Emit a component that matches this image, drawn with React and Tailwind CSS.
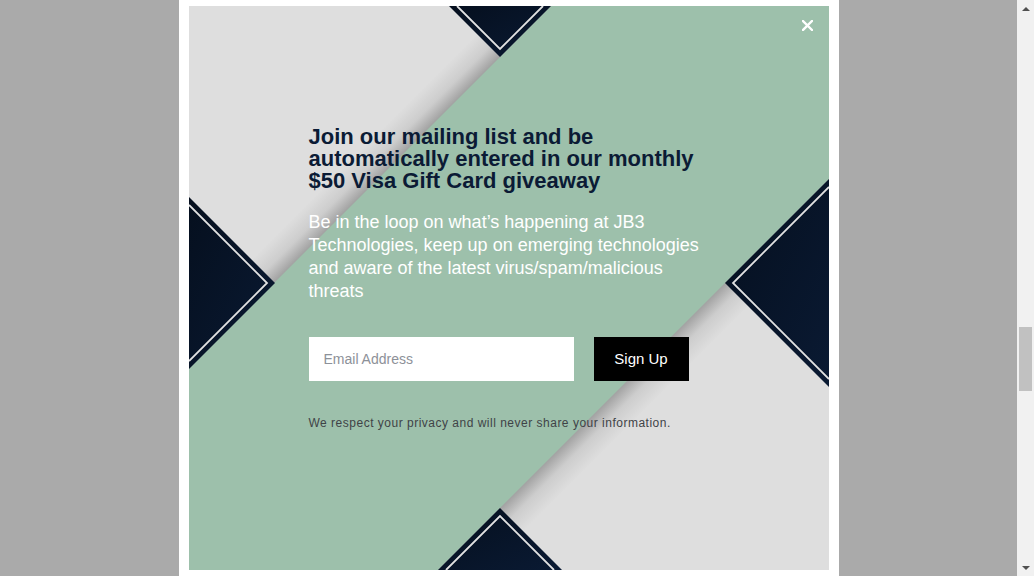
import React from 'react';

const Backdrop = () => (
    <svg className="absolute inset-0" width="640" height="564" viewBox="0 0 640 564">
        <defs>
            <linearGradient id="shadeTop" gradientUnits="userSpaceOnUse" x1="158" y1="158" x2="181" y2="181">
                <stop offset="0" stopColor="#dedede" />
                <stop offset="0.55" stopColor="#cdcdcd" />
                <stop offset="1" stopColor="#a2a2a2" />
            </linearGradient>
            <linearGradient id="shadeBottom" gradientUnits="userSpaceOnUse" x1="406.5" y1="406.5" x2="430" y2="430">
                <stop offset="0" stopColor="#a2a2a2" />
                <stop offset="0.45" stopColor="#cdcdcd" />
                <stop offset="1" stopColor="#dedede" />
            </linearGradient>
            <linearGradient id="navy" x1="0" y1="0" x2="1" y2="1">
                <stop offset="0" stopColor="#050f1e" />
                <stop offset="1" stopColor="#0a1a33" />
            </linearGradient>
        </defs>

        {/* green band + shaded grey corners */}
        <rect width="640" height="564" fill="#9dc0ab" />
        <polygon points="0,0 362,0 0,362" fill="url(#shadeTop)" />
        <polygon points="640,173 640,564 249,564" fill="url(#shadeBottom)" />

        {/* navy corner pieces */}
        <polygon points="260,0 362,0 311,51" fill="url(#navy)" />
        <polyline points="268,0 311,43 354,0" fill="none" stroke="#e2e2e2" strokeWidth="1.8" />

        <polygon points="0,191 86,277 0,363" fill="url(#navy)" />
        <polyline points="0,199 78,277 0,355" fill="none" stroke="#e2e2e2" strokeWidth="1.8" />

        <polygon points="640,173 536,277 640,381" fill="url(#navy)" />
        <polyline points="640,181 544,277 640,373" fill="none" stroke="#e2e2e2" strokeWidth="1.8" />

        <polygon points="249,564 311,502 373,564" fill="url(#navy)" />
        <polyline points="257,564 311,510 365,564" fill="none" stroke="#e2e2e2" strokeWidth="1.8" />
    </svg>
);

const Scrollbar = () => (
    <div className="w-[17px] h-full bg-[#f1f1f1] flex flex-col items-center">
        <div className="h-[17px] flex items-center justify-center">
            <div className="w-0 h-0 border-l-[4px] border-r-[4px] border-b-[4px] border-l-transparent border-r-transparent border-b-[#505050]" />
        </div>
        <div className="h-[310px]" />
        <div className="w-[13px] h-[64px] bg-[#c1c1c1]" />
        <div className="flex-1" />
        <div className="h-[17px] flex items-center justify-center">
            <div className="w-0 h-0 border-l-[4px] border-r-[4px] border-t-[4px] border-l-transparent border-r-transparent border-t-[#505050]" />
        </div>
    </div>
);

export default function App() {
    return (
        <div className="flex w-full h-[576px] overflow-hidden bg-[#aaaaaa]" style={{ fontFamily: '"Liberation Sans", Arial, sans-serif' }}>
            <div className="flex-1 flex justify-center">
                <div className="w-[660px] h-[580px] bg-white px-[10px] pt-[6px]">
                    <div className="relative w-[640px] h-[564px] overflow-hidden">
                        <Backdrop />

                        {/* close */}
                        <button className="absolute top-[13px] right-[15px] w-[12px] h-[12px] flex items-center justify-center">
                            <svg width="11" height="11" viewBox="0 0 11 11">
                                <path d="M1 1 L10 10 M10 1 L1 10" stroke="#ffffff" strokeWidth="2.4" strokeLinecap="square" />
                            </svg>
                        </button>

                        <div className="relative pl-[120px] pt-[120px] w-[520px] flex flex-col">
                            <h2 className="text-[22px] leading-[22px] font-bold text-[#0b1b35]">
                                Join our mailing list and be automatically entered in our monthly $50 Visa Gift Card giveaway
                            </h2>
                            <p className="mt-[19px] text-[18px] leading-[23px] text-white">
                                Be in the loop on what’s happening at JB3 Technologies, keep up on emerging technologies and aware of the latest virus/spam/malicious threats
                            </p>

                            <form className="mt-[34px] flex gap-[20px]" onSubmit={e => e.preventDefault()}>
                                <input
                                    type="email"
                                    placeholder="Email Address"
                                    className="w-[265px] h-[44px] bg-white px-[15px] text-[14px] text-[#333] placeholder:text-[#8d9199] outline-none"
                                />
                                <button type="submit" className="w-[95px] h-[44px] bg-black text-white text-[15px]">
                                    Sign Up
                                </button>
                            </form>

                            <p className="mt-[34px] text-[12px] leading-[16px] tracking-[0.5px] text-[#3f4347]">
                                We respect your privacy and will never share your information.
                            </p>
                        </div>
                    </div>
                </div>
            </div>
            <Scrollbar />
        </div>
    );
}
